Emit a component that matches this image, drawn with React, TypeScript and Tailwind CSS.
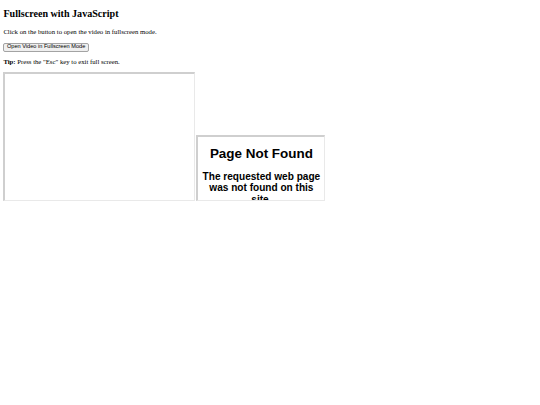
export default function App() {
  return (
    <div className="w-[540px] h-[405px] bg-white overflow-hidden">
      <div className="pl-[3.4px] pr-[3.4px] pt-[8.4px]" style={{ fontFamily: '"Liberation Serif", "Times New Roman", serif' }}>
        <h2 className="text-[10.08px] font-bold leading-[11.6px] text-black m-0">Fullscreen with JavaScript</h2>
        <p className="mt-[8.4px] text-[6.72px] leading-[7.7px] text-black">Click on the button to open the video in fullscreen mode.</p>
        <div className="mt-[6.7px] h-[8.8px] flex items-start">
          <button
            className="h-[8.8px] px-[2.6px] text-[5.6px] leading-[5.6px] text-black bg-[#efefef] border border-[#a3a3a3] rounded-[2px]"
            style={{ fontFamily: '"Liberation Sans", Arial, sans-serif' }}
          >
            Open Video in Fullscreen Mode
          </button>
        </div>
        <p className="mt-[6.7px] text-[6.72px] leading-[7.7px] text-black">
          <b>Tip:</b> Press the "Esc" key to exit full screen.
        </p>
        <div className="mt-[6.4px] flex items-start gap-[1px]">
          <div className="w-[192px] h-[129px] bg-white border-t-2 border-l-2 border-t-[#cfcfcf] border-l-[#cfcfcf] border-b border-r border-b-[#e9e9e9] border-r-[#e9e9e9]" />
          <div
            className="mt-[63px] w-[129px] h-[66px] overflow-hidden bg-white border-t-2 border-l-2 border-t-[#cfcfcf] border-l-[#cfcfcf] border-b border-r border-b-[#e9e9e9] border-r-[#e9e9e9] text-center text-black"
            style={{ fontFamily: '"Liberation Sans", Arial, sans-serif' }}
          >
            <div className="px-[3.4px]">
              <h1 className="mt-[9px] text-[13.44px] font-bold leading-[15.5px]">Page Not Found</h1>
              <h2 className="mt-[9px] text-[10.08px] font-bold leading-[11.6px]">The requested web page was not found on this site.</h2>
            </div>
          </div>
        </div>
      </div>
    </div>
  );
}
